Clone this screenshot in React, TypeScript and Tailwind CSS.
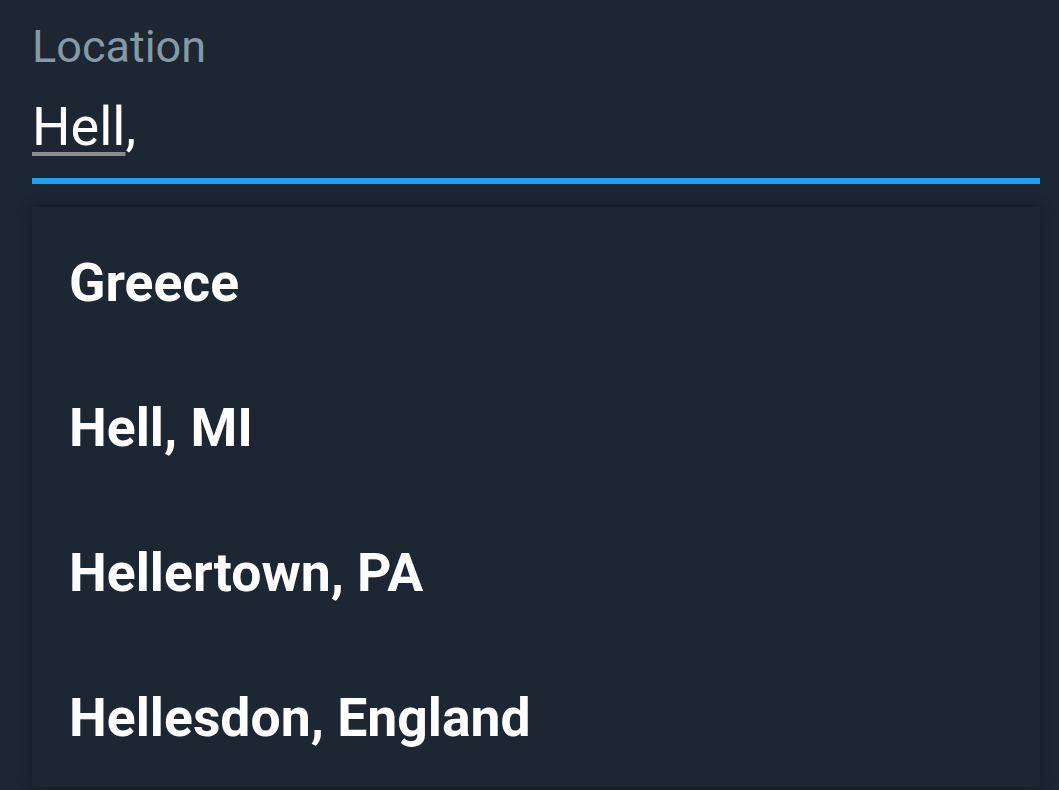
const suggestions = ["Greece", "Hell, MI", "Hellertown, PA", "Hellesdon, England"];

export default function App() {
  return (
    <div
      className="min-h-screen w-full overflow-hidden bg-[#1c2733] pl-[32px] pr-[19px] pt-[20px]"
      style={{ fontFamily: "Roboto, 'Noto Sans', sans-serif" }}
    >
      <div className="text-[45px] leading-[53px] text-[#8899a6]">Location</div>
      <div className="mt-[22px] border-b-[6px] border-[#1da1f2] pb-[19px]">
        <div className="text-[54px] leading-[64px] text-white">
          <span className="underline decoration-[#8a8d91] decoration-[4px] underline-offset-[7px]">
            Hell
          </span>
          ,
        </div>
      </div>
      <div className="mt-[23px] bg-[#1c2733] shadow-[0_0_12px_rgba(0,0,0,0.35)]">
        {suggestions.map((s) => (
          <div
            key={s}
            className="flex h-[145px] items-center pl-[37px] pt-[8px] text-[53.5px] font-bold text-white"
          >
            {s}
          </div>
        ))}
      </div>
    </div>
  );
}
